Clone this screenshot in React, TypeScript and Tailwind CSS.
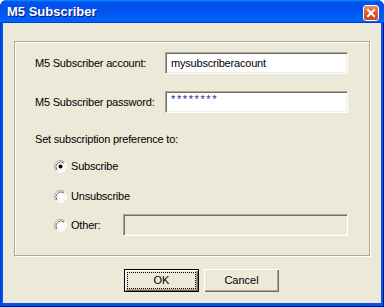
import React from 'react';

function Radio({ checked }: { checked?: boolean }) {
  return (
    <svg width="13" height="13" viewBox="0 0 13 13" className="shrink-0">
      <circle cx="6.5" cy="6.5" r="5.5" fill="#fff" />
      <path d="M2.25 10.75 A6 6 0 0 1 10.75 2.25" fill="none" stroke="#aca899" strokeWidth="1" />
      <path d="M10.75 2.25 A6 6 0 0 1 2.25 10.75" fill="none" stroke="#ffffff" strokeWidth="1" />
      <path d="M3 10 A5 5 0 0 1 10 3" fill="none" stroke="#716f64" strokeWidth="1" />
      <path d="M10 3 A5 5 0 0 1 3 10" fill="none" stroke="#f1efe2" strokeWidth="1" />
      {checked && <circle cx="6.5" cy="6.5" r="2" fill="#000" />}
    </svg>
  );
}

const sunken =
  'h-[22px] border border-t-[#aca899] border-l-[#aca899] border-b-white border-r-white shadow-[inset_1px_1px_0_#716f64,inset_-1px_-1px_0_#f1efe2] flex items-center';

export default function App() {
  return (
    <div className="w-[384px] h-[307px] flex flex-col rounded-t-[7px] overflow-hidden bg-[#0055ea] font-['Liberation_Sans',Arial,sans-serif] text-[11px] text-black shadow-[inset_1px_0_#0831d9,inset_-1px_0_#00138c,inset_0_-1px_#00138c]">
      {/* title bar */}
      <div className="h-[23px] shrink-0 flex items-start bg-[linear-gradient(180deg,#0997ff,#0053ee_8%,#0050ee_40%,#0062f8_88%,#0064fc_93%,#005bff_95%,#003dd7_96%,#003dd7)]">
        <span className="pl-[7px] pt-[4px] text-[13px] leading-[15px] font-bold text-white [text-shadow:1px_1px_#0f1089]">
          M5 Subscriber
        </span>
        <div className="ml-auto mr-[5px] mt-[5px] w-[16px] h-[16px] rounded-[3px] border border-white bg-[linear-gradient(180deg,#f1906c,#e0582f_45%,#cf4520)] flex items-center justify-center">
          <svg width="10" height="10" viewBox="0 0 10 10">
            <path d="M2 2 L8 8 M8 2 L2 8" stroke="#fff" strokeWidth="2" strokeLinecap="square" />
          </svg>
        </div>
      </div>

      {/* body */}
      <div className="flex-1 mx-[3px] mb-[4px] bg-[#ece9d8] pt-[18px] px-[11px] flex flex-col">
        <div className="h-[215px] shrink-0 border border-[#aca899] shadow-[inset_1px_1px_0_#fff,1px_1px_0_#fff] pl-[20px] pt-[10px] tracking-[-0.2px]">
          <div className="flex items-center">
            <span className="w-[130px]">M5 Subscriber account:</span>
            <div className={`${sunken} w-[183px] bg-white pl-[5px]`}>mysubscriberacount</div>
          </div>
          <div className="flex items-center mt-[17px]">
            <span className="w-[130px]">M5 Subscriber password:</span>
            <div className={`${sunken} w-[183px] bg-white pl-[5px]`}>
              <span className="text-[#1c2f86] tracking-[1.6px] leading-[11px] -mt-[5px]">********</span>
            </div>
          </div>
          <div className="mt-[20px] leading-[13px]">Set subscription preference to:</div>

          <div className="ml-[19px]">
            <div className="mt-[14px] h-[13px] flex items-center gap-[4px]">
              <Radio checked />
              <span>Subscribe</span>
            </div>
            <div className="mt-[17px] h-[13px] flex items-center gap-[4px]">
              <Radio />
              <span>Unsubscribe</span>
            </div>
            <div className="mt-[11px] h-[22px] flex items-center">
              <Radio />
              <span className="ml-[4px] w-[52px]">Other:</span>
              <div className={`${sunken} w-[225px] bg-[#ece9d8]`} />
            </div>
          </div>
        </div>

        <div className="mt-[13px] pl-[110px] flex gap-[5px]">
          <button className="w-[75px] h-[23px] border border-black p-[2px] bg-[#ece9d8] shadow-[inset_1px_1px_0_#fff,inset_-1px_-1px_0_#716f64,inset_-2px_-2px_0_#aca899] flex">
            <span className="flex-1 border border-dotted border-black flex items-center justify-center">OK</span>
          </button>
          <button className="w-[75px] h-[23px] bg-[#ece9d8] shadow-[inset_1px_1px_0_#fff,inset_-1px_-1px_0_#716f64,inset_-2px_-2px_0_#aca899] flex items-center justify-center">
            Cancel
          </button>
        </div>
      </div>
    </div>
  );
}
